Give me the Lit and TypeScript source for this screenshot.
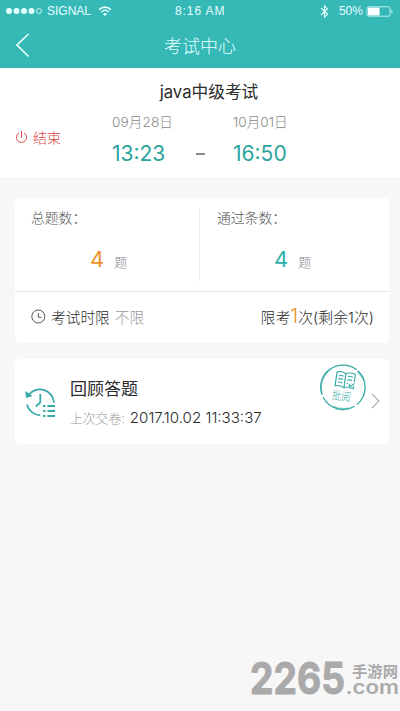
import { LitElement, html, css } from "lit";
import { customElement } from "lit/decorators.js";

@customElement("status-bar")
class StatusBar extends LitElement {
  static styles = css`
    :host { display: flex; height: 22px; align-items: center; color: #e6ffff; font: 12px/22px "Liberation Sans", sans-serif; }
    .left { display: flex; align-items: center; width: 175px; padding-left: 6px; box-sizing: border-box; }
    .signal { margin-left: 5px; }
    .wifi { margin-left: 7px; }
    .time { width: 144px; letter-spacing: 0.9px; }
    .battery { margin-left: 3px; }
    .percent { margin-left: 9px; letter-spacing: -0.1px; }
    svg { display: block; flex: none; }
  `;
  render() {
    return html`
      <div class="left">
        <svg width="36" height="8" viewBox="0 0 36 8" fill="#e6ffff">
          <circle cx="3" cy="4" r="3" /><circle cx="10.5" cy="4" r="3" /><circle cx="18" cy="4" r="3" /><circle cx="25.5" cy="4" r="3" />
          <circle cx="33" cy="4" r="2.5" fill="none" stroke="#e6ffff" stroke-width=".8" />
        </svg>
        <span class="signal">SIGNAL</span>
        <svg class="wifi" width="14" height="10" viewBox="0 0 14 10" fill="none" stroke="#e6ffff" stroke-width="1.5">
          <path d="M1 3.6Q7-1.4 13 3.6M3.2 6Q7 2.6 10.8 6" /><path d="M5 8Q7 6 9 8L7 10Z" fill="#e6ffff" stroke="none" />
        </svg>
      </div>
      <span class="time">8:16 AM</span>
      <svg width="11" height="15" viewBox="0 0 11 15" fill="none" stroke="#e6ffff" stroke-width="1.1"><path d="M2 4L8.5 10L5.5 13.2V1.8L8.5 5L2 11" /></svg>
      <span class="percent">50%</span>
      <svg class="battery" width="28" height="11" viewBox="0 0 28 11"><rect x="1" y=".8" width="23" height="9.4" rx="1.2" fill="none" stroke="#b5f1f0" /><rect x="2" y="1.6" width="11.5" height="7.8" fill="#fff" /><path d="M25.3 3.7Q28 5.5 25.3 7.3Z" fill="#d8ffff" /></svg>
    `;
  }
}

@customElement("review-stamp")
class ReviewStamp extends LitElement {
  static styles = css`
    :host { display: block; width: 48px; height: 48px; }
    svg { display: block; }
    text { font: 300 11.5px "Noto Sans CJK SC", sans-serif; }
  `;
  render() {
    return html`<svg width="48" height="48" viewBox="0 0 48 48" fill="none" stroke="#36aaa5">
      <path d="M35.6 43.2A22.2 22.2 0 0 1 4.2 34.2M3.2 32A22.2 22.2 0 0 1 37.7 6.8M38.7 7.7A22.2 22.2 0 0 1 38 41.4" stroke-width="1.3" />
      <path d="M2.8 30A22 22 0 0 1 9 8M14 43.5A22 22 0 0 0 30 45.2M39 8.5L44.5 16" stroke-width="2" opacity=".5" />
      <g transform="translate(26 17) rotate(8)" stroke-width="1.15">
        <path d="M0-6.3Q-4.5-8.7-9-7V7Q-4 5.5 0 7.9V-6.3Q4.5-8.7 9.5-7V.7M0 7.9Q3 6.1 6 6.5" />
        <path d="M-6.8-3.8Q-4-4.4-2-3.6M-6.8-.4Q-4-1-2-.2M-6.8 3Q-4 2.4-2 3.2M2.3-3.6Q4.5-4.6 7.3-3.9M2.3-.2Q4.5-1.2 7-.5M2.3 3.2L3.5 2.8M4.4 3.6L6.2 5.6L10 2.1M9.4 4.8V7.3L5 7.1" />
      </g>
      <text x="12.5" y="37.3" textLength="19" lengthAdjust="spacingAndGlyphs" transform="rotate(8 22 36)" fill="#36aaa5" stroke="none">批阅</text>
    </svg>`;
  }
}

@customElement("app-root")
class AppRoot extends LitElement {
  static styles = css`
    :host { display: block; position: relative; height: 711px; overflow: hidden; background: #f7f7f7; color: #2b2b2b; font-family: Inter, "Noto Sans CJK SC", sans-serif; font-weight: 300; }
    * { box-sizing: border-box; }
    svg { display: block; flex: none; }
    header { height: 68px; background: #36b8b6; }
    nav { display: grid; grid-template-columns: 60px 1fr 60px; height: 46px; align-items: center; color: #e6ffff; text-align: center; font-size: 18px; }
    nav span { padding-bottom: 1px; }
    .back { margin-left: 15px; }
    .exam { height: 109px; background: #fff; padding-top: 11px; }
    .name { display: block; text-align: center; font-size: 16.7px; line-height: 26px; font-weight: 400; padding-left: 18px; }
    .period { display: grid; grid-template-columns: 97px 83px 53px 1fr; height: 66px; }
    .ended { display: flex; align-items: center; gap: 5px; padding: 0 0 0 15px; height: 24px; margin-top: 20px; color: #dc4545; font-size: 14px; }
    .moment { display: flex; flex-direction: column; }
    .start { margin-left: 15px; }
    .date { color: #898989; font-size: 13.6px; line-height: 20px; margin-top: 7px; white-space: nowrap; }
    .start .date { letter-spacing: 0.1px; }
    .clock { color: #2ba49d; font-size: 21px; line-height: 30px; margin-top: 7px; font-weight: 400; white-space: nowrap; }
    .dash { width: 9px; height: 1.5px; background: #888; margin: 48px 0 0 16px; }
    .card { background: #fff; border-radius: 5px; margin: 0 11px 0 15px; }
    .summary { margin-top: 21px; height: 145px; }
    .counts { display: grid; grid-template-columns: 1fr 1fr; height: 94px; border-bottom: 1px solid #e9e9e9; padding: 11px 0; }
    .count { padding-left: 16px; height: 72px; }
    .count + .count { border-left: 1px solid #ececec; margin-left: -3px; padding-left: 17px; }
    .label { display: block; font-size: 13.8px; line-height: 18px; color: #555; }
    .value { display: flex; align-items: baseline; gap: 10px; padding-left: 59px; margin-top: 14px; line-height: 36px; font-size: 13px; color: #888; }
    .value b { font-size: 22px; font-weight: 400; color: #ef9129; }
    .value .passed { color: #2bb0a8; }
    .count + .count .value { padding-left: 57px; }
    .limits { display: flex; align-items: center; justify-content: space-between; height: 51px; padding: 0 15px 2px 16px; font-size: 14.7px; }
    .time { display: flex; align-items: center; gap: 5px; }
    .muted { color: #999; }
    .attempts { display: flex; align-items: baseline; white-space: nowrap; font-size: 14.9px; padding-bottom: 1px; }
    .attempts b { font-weight: 300; font-size: 20px; line-height: 30px; color: #ef9129; }
    .review { margin-top: 16px; height: 85px; display: flex; padding: 0 9px 0 10px; position: relative; }
    .history { margin-top: 27px; }
    .text { margin-left: 12px; flex: 1; }
    .title { display: block; font-size: 17px; line-height: 26px; margin-top: 16.5px; font-weight: 400; }
    .last { display: flex; gap: 5px; font-size: 15.1px; line-height: 22px; margin-top: 5px; white-space: nowrap; align-items: baseline; }
    .last .muted { font-size: 12.8px; }
    .arrow { margin-top: 34px; }
    review-stamp { position: absolute; right: 22px; top: 4px; }
    .watermark { position: absolute; left: 240px; top: 650px; }
    .digits { font: 700 44px Inter, sans-serif; }
    .site { font: 700 15px "Noto Sans CJK SC", sans-serif; }
    .domain { font: 600 19px Inter, sans-serif; }
  `;
  render() {
    return html`
      <header>
        <status-bar></status-bar>
        <nav>
          <svg class="back" width="16" height="26" viewBox="0 0 16 26" fill="none" stroke="#e6ffff" stroke-width="1.7"><path d="M13.5 2L2 13L13.5 24.5" /></svg>
          <span>考试中心</span>
        </nav>
      </header>
      <section class="exam">
        <span class="name">java中级考试</span>
        <div class="period">
          <div class="ended">
            <svg width="13" height="14" viewBox="0 0 13 14" fill="none" stroke="#dc4545"><path d="M4 2.9A5.1 5.1 0 1 0 9 2.9M6.5 1V7.5" /></svg>
            <span>结束</span>
          </div>
          <div class="moment start"><span class="date">09月28日</span><span class="clock">13:23</span></div>
          <div class="dash"></div>
          <div class="moment"><span class="date">10月01日</span><span class="clock">16:50</span></div>
        </div>
      </section>
      <section class="card summary">
        <div class="counts">
          <div class="count"><span class="label">总题数：</span><div class="value"><b>4</b>题</div></div>
          <div class="count"><span class="label">通过条数：</span><div class="value"><b class="passed">4</b>题</div></div>
        </div>
        <div class="limits">
          <div class="time">
            <svg width="15" height="15" viewBox="0 0 15 15" fill="none" stroke="#555"><circle cx="7.3" cy="7.5" r="6.5" /><path d="M7.3 4V8.3H10.5" /></svg>
            <span>考试时限</span><span class="muted">不限</span>
          </div>
          <div class="attempts">限考<b>1</b>次(剩余1次)</div>
        </div>
      </section>
      <section class="card review">
        <svg class="history" width="33" height="32" viewBox="0 0 33 32" fill="none" stroke="#36aba7" stroke-width="1.8">
          <path d="M3.4 9.3A14 13.8 0 0 1 28.9 16.5M2 18.5A14 13.8 0 0 0 15.3 29.3M15.3 8V16.3L10.8 20.5" />
          <path d="M.4 5L1 12L7.5 10Z" fill="#36aba7" stroke="none" />
          <path d="M18 20H20.5M22.4 20H30M18 25H20.5M22.4 25H30M18 30H20.5M22.4 30H30" stroke-width="1.9" />
        </svg>
        <div class="text">
          <span class="title">回顾答题</span>
          <div class="last"><span class="muted">上次交卷:</span><span>2017.10.02 11:33:37</span></div>
        </div>
        <svg class="arrow" width="9" height="16" viewBox="0 0 9 16" fill="none" stroke="#aaa" stroke-width="1.1"><path d="M1 1L8 8L1 15" /></svg>
        <review-stamp></review-stamp>
      </section>
      <svg class="watermark" width="160" height="61" viewBox="0 0 160 61" fill="#aaa">
        <text class="digits" x="10" y="43.5" textLength="95" lengthAdjust="spacingAndGlyphs" stroke="#aaa" stroke-width="1" stroke-linejoin="round">2265</text>
        <text class="site" x="112" y="26.5" textLength="46" lengthAdjust="spacingAndGlyphs">手游网</text>
        <text class="domain" x="105.5" y="43.5" textLength="53.5" lengthAdjust="spacingAndGlyphs">.com</text>
      </svg>
    `;
  }
}
